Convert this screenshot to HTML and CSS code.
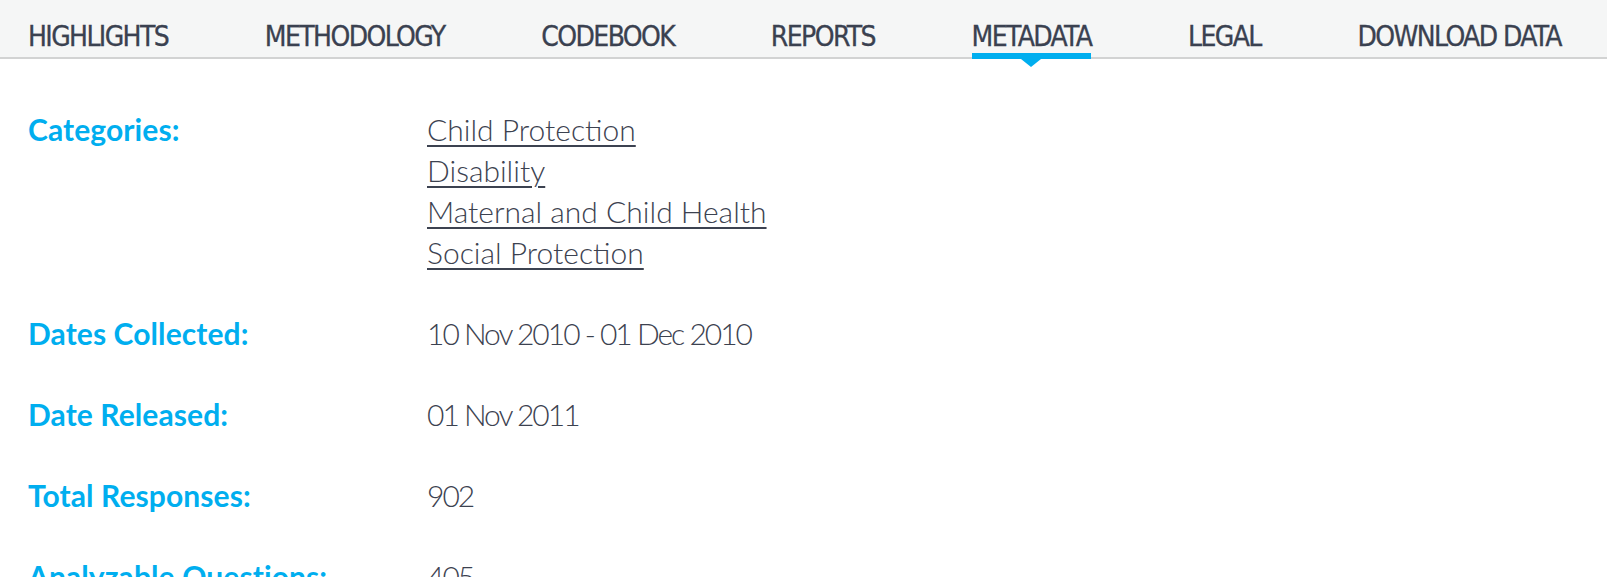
FILE: index.html
```html
<!DOCTYPE html>
<html lang="en">
<head>
<meta charset="utf-8">
<title>Metadata</title>
<link rel="stylesheet" href="styles.css">
</head>
<body>
<nav class="tabs">
  <a class="tab" href="#">HIGHLIGHTS</a>
  <a class="tab" href="#">METHODOLOGY</a>
  <a class="tab" href="#">CODEBOOK</a>
  <a class="tab" href="#">REPORTS</a>
  <a class="tab active" href="#">METADATA</a>
  <a class="tab" href="#">LEGAL</a>
  <a class="tab" href="#">DOWNLOAD DATA</a>
</nav>
<main class="meta">
  <div class="row">
    <div class="label">Categories:</div>
    <div class="value">
      <a href="#">Child Protection</a><br>
      <a href="#">Disability</a><br>
      <a href="#">Maternal and Child Health</a><br>
      <a href="#">Social Protection</a>
    </div>
  </div>
  <div class="row">
    <div class="label">Dates Collected:</div>
    <div class="value num">10 Nov 2010 - 01 Dec 2010</div>
  </div>
  <div class="row">
    <div class="label">Date Released:</div>
    <div class="value num">01 Nov 2011</div>
  </div>
  <div class="row">
    <div class="label">Total Responses:</div>
    <div class="value num">902</div>
  </div>
  <div class="row">
    <div class="label">Analyzable Questions:</div>
    <div class="value num">405</div>
  </div>
</main>
</body>
</html>
```
FILE: styles.css
```css
html, body {
  margin: 0;
  padding: 0;
  background: #ffffff;
}
body {
  font-family: "Lato", "Open Sans", sans-serif;
  overflow: hidden;
}
.tabs {
  display: flex;
  justify-content: space-between;
  background: #f5f6f6;
  border-bottom: 2px solid #d2d3d3;
  height: 57px;
  padding: 0 46px 0 28px;
}
.tab {
  position: relative;
  display: block;
  padding-top: 22px;
  font-family: "Liberation Sans Narrow", "DejaVu Sans Condensed", "Roboto Condensed", "Liberation Sans", sans-serif;
  font-size: 28px;
  line-height: 30px;
  letter-spacing: -1.6px;
  color: #3a4150;
  -webkit-text-stroke: 0.3px #3a4150;
  text-decoration: none;
  white-space: nowrap;
}
.tab.active::before {
  content: "";
  position: absolute;
  left: 0;
  right: 0;
  bottom: -2px;
  height: 6px;
  background: #00aeef;
}
.tab.active::after {
  content: "";
  position: absolute;
  left: 50%;
  bottom: -10px;
  margin-left: -10px;
  border-left: 10px solid transparent;
  border-right: 10px solid transparent;
  border-top: 8px solid #00aeef;
}
.meta {
  padding: 50px 28px 0 28px;
}
.row {
  display: grid;
  grid-template-columns: 399px 1fr;
  margin-bottom: 40px;
  font-size: 30px;
  line-height: 41px;
}
.label {
  color: #00aeef;
  font-weight: 700;
  letter-spacing: 0.1px;
}
.value {
  color: #3c4250;
  font-weight: 300;
}
.value.num {
  letter-spacing: -2px;
}
.value a {
  color: #3c4250;
  text-decoration: underline;
  text-decoration-thickness: 2px;
  text-underline-offset: 4px;
}
```
